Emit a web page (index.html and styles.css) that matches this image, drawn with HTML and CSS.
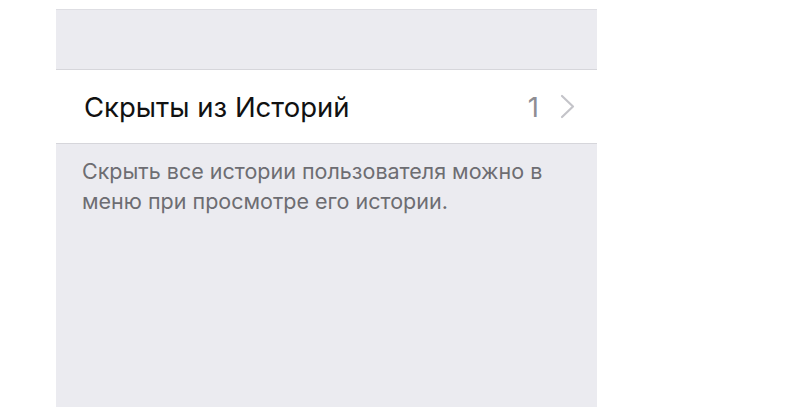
FILE: index.html
```html
<!DOCTYPE html>
<html lang="ru">
<head>
  <meta charset="UTF-8">
  <title>Скрыты из Историй</title>
  <link rel="stylesheet" href="styles.css">
</head>
<body>

<div class="screen">
  <div class="group-gap"></div>

  <div class="cell">
    <span class="cell-title">Скрыты из Историй</span>
    <span class="cell-detail">
      <span class="cell-count">1</span>
      <svg class="chevron" width="15" height="25" viewBox="0 0 15 25">
        <path d="M2 2 L13 12.5 L2 23" fill="none" stroke="#c4c4c9" stroke-width="2.2" stroke-linecap="round" stroke-linejoin="round"/>
      </svg>
    </span>
  </div>

  <p class="group-footer">Скрыть все истории пользователя можно в меню при просмотре его истории.</p>
</div>

</body>
</html>
```

FILE: styles.css
```css
body {
  margin: 0;
  background: #fff;
  font-family: "Inter", "Liberation Sans", sans-serif;
}
.screen {
  width: 541px;
  margin-left: 56px;
  margin-top: 9px;
  min-height: 398px;
  background: #ebebf0;
  border-top: 1px solid #dedee3;
}
.group-gap {
  height: 59px;
}
.cell {
  display: flex;
  align-items: center;
  justify-content: space-between;
  height: 73px;
  padding: 0 22px 0 28px;
  background: #fff;
  border-top: 1px solid #d6d6db;
  border-bottom: 1px solid #d6d6db;
}
.cell-title {
  font-size: 27.5px;
  color: #111;
}
.cell-detail {
  display: flex;
  align-items: center;
  gap: 21px;
}
.cell-count {
  font-size: 27.5px;
  color: #8e8e93;
}
.group-footer {
  margin: 0;
  padding: 12px 40px 0 26px;
  font-size: 21.5px;
  line-height: 30px;
  color: #6d6d72;
}
```
